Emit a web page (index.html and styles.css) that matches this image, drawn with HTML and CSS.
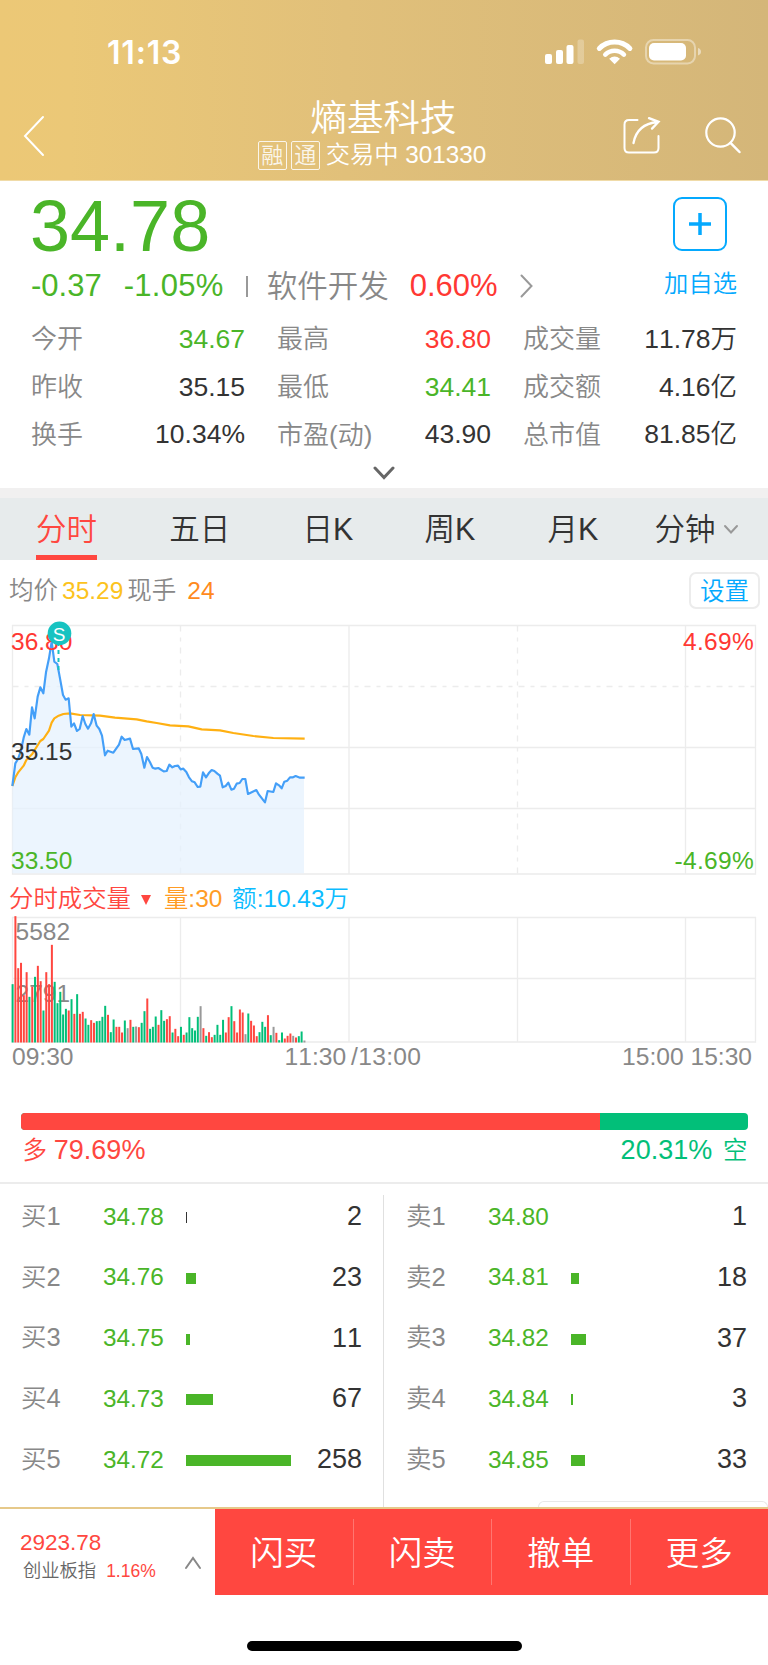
FILE: index.html
```html
<!DOCTYPE html>
<html lang="zh-CN">
<head>
<meta charset="UTF-8" />
<meta name="viewport" content="width=device-width, initial-scale=1" />
<title>熵基科技 301330</title>
<link rel="stylesheet" href="styles.css">
</head>
<body>

<header class="header">
  <div class="status-bar">
    <span class="time">11:13</span>
    <svg class="status-icons" width="160" height="28" viewBox="0 0 160 28" fill="#fff">
      <rect x="0" y="16" width="7" height="10" rx="2" />
      <rect x="11" y="12" width="7" height="14" rx="2" />
      <rect x="21.5" y="7" width="7" height="19" rx="2" />
      <rect x="32.5" y="1.5" width="6.5" height="24.5" rx="2" opacity=".25" />
      <g fill="none" stroke="#fff" stroke-width="5">
        <path d="M54.3 10.4 A21.5 21.5 0 0 1 84.9 10.4" />
        <path d="M60.3 16.6 A13 13 0 0 1 78.9 16.6" stroke-width="4.6" />
      </g>
      <path d="M69.6 26.3 L64.2 20.8 Q69.6 16.4 75 20.8 Z" />
      <rect x="101" y="2" width="49" height="23.5" rx="7.5" fill="none" stroke="#fff" stroke-width="2" opacity=".4" />
      <rect x="104" y="5" width="37" height="17.5" rx="5" />
      <path d="M153 10 Q156 11 156 13.8 Q156 16.5 153 17.5 Z" opacity=".5" />
    </svg>
  </div>
  <div class="title-bar">
    <svg class="back" width="22" height="42" viewBox="0 0 22 42"><path d="M20 2 L2 21 L20 40" /></svg>
    <div class="title">
      <h1>熵基科技</h1>
      <p><i>融</i><i>通</i><span>交易中 301330</span></p>
    </div>
    <div class="tools">
      <svg width="40" height="40" viewBox="0 0 40 40">
        <path d="M15.5 4 H7 Q2.5 4 2.5 8.5 V32 Q2.5 36.5 7 36.5 H32 Q36.5 36.5 36.5 32 V20" />
        <path d="M11.5 27 Q15 8 35.5 6 M27 2.2 L36.5 5.8 L30 12.6" stroke-width="2.3" />
      </svg>
      <svg width="40" height="40" viewBox="0 0 40 40">
        <circle cx="17.5" cy="16.5" r="14.2" stroke-width="2.2" />
        <path d="M27.5 26.8 L36.5 36" stroke-width="2.5" />
      </svg>
    </div>
  </div>
</header>

<section class="quote">
  <div class="quote-top">
    <div class="price">34.78</div>
    <button class="add">
      <svg width="24" height="24" viewBox="0 0 24 24"><path d="M12 1 V23 M1 12 H23" /></svg>
    </button>
  </div>
  <div class="change">
    <span class="green">-0.37</span>
    <span class="green pct">-1.05%</span>
    <span class="sep"></span>
    <span class="sector">软件开发</span>
    <span class="red">0.60%</span>
    <svg width="13" height="24" viewBox="0 0 13 24"><path d="M1.5 1.5 L11.5 12 L1.5 22.5" /></svg>
    <span class="add-text">加自选</span>
  </div>
  <div class="stats">
    <div><label>今开</label><b class="green">34.67</b></div>
    <div><label>最高</label><b class="red">36.80</b></div>
    <div><label>成交量</label><b>11.78万</b></div>
    <div><label>昨收</label><b>35.15</b></div>
    <div><label>最低</label><b class="green">34.41</b></div>
    <div><label>成交额</label><b>4.16亿</b></div>
    <div><label>换手</label><b>10.34%</b></div>
    <div><label>市盈(动)</label><b>43.90</b></div>
    <div><label>总市值</label><b>81.85亿</b></div>
  </div>
  <svg class="expand" width="22" height="14" viewBox="0 0 22 14"><path d="M2 2 L11 11.5 L20 2" /></svg>
</section>

<nav class="tabs">
  <a class="active">分时</a>
  <a>五日</a>
  <a>日K</a>
  <a>周K</a>
  <a>月K</a>
  <a>分钟<svg width="16" height="11" viewBox="0 0 16 11"><path d="M2 2 L8 8.5 L14 2" /></svg></a>
</nav>

<div class="info">
  <span class="avg">均价<em>35.29</em></span>
  <span>现手</span>
  <span class="hand">24</span>
  <button class="settings">设置</button>
</div>

<svg class="chart" width="768" height="262" viewBox="0 0 768 262">
  <g class="grid">
    <path d="M12.5 11.5 H755.5 V260 H12.5 Z M12.5 133.5 H755.5 M12.5 194.5 H755.5 M349 11.5 V260 M685.5 11.5 V260" />
    <path class="dashed" d="M12.5 72.5 H755.5 M180.5 11.5 V260 M517.5 11.5 V260" />
  </g>
  <!-- points are at 3x scale -->
  <g transform="translate(0 -4) scale(.33333)">
    <path class="area" d="M37 528 46 460 54 447 62 425 71 383 79 357 88 374 96 292 104 325 113 260 121 232 130 250 138 187 147 145 155 95 163 155 172 162 180 205 189 255 197 269 206 265 214 350 222 340 231 363 239 357 248 318 256 342 264 356 273 340 281 312 290 347 298 357 306 377 315 436 323 422 340 428 357 404 365 380 374 390 390 386 399 417 416 415 424 432 433 473 441 441 450 457 458 473 466 476 475 474 491 484 500 483 508 464 517 472 525 468 534 467 542 478 550 476 559 486 567 502 576 514 584 517 593 531 601 530 609 487 618 502 626 490 635 480 643 483 652 491 660 497 668 532 677 528 685 518 694 539 702 536 710 521 719 519 727 507 736 507 744 552 752 548 769 540 777 554 795 577 803 543 820 546 828 520 837 526 845 535 853 515 862 512 870 502 879 502 887 498 900 503 912 503 V790 H37 Z" />
    <polyline class="avg-line" points="37,528 46,502 54,488 71,467 79,450 96,433 104,420 121,393 130,387 147,362 155,338 163,325 176,317 190,312 210,310 240,315 300,317 345,323 410,328 440,334 470,339 510,346 565,349 605,358 660,361 700,369 760,378 820,384 914,386" />
    <polyline class="price-line" points="37,528 46,460 54,447 62,425 71,383 79,357 88,374 96,292 104,325 113,260 121,232 130,250 138,187 147,145 155,95 163,155 172,162 180,205 189,255 197,269 206,265 214,350 222,340 231,363 239,357 248,318 256,342 264,356 273,340 281,312 290,347 298,357 306,377 315,436 323,422 340,428 357,404 365,380 374,390 390,386 399,417 416,415 424,432 433,473 441,441 450,457 458,473 466,476 475,474 491,484 500,483 508,464 517,472 525,468 534,467 542,478 550,476 559,486 567,502 576,514 584,517 593,531 601,530 609,487 618,502 626,490 635,480 643,483 652,491 660,497 668,532 677,528 685,518 694,539 702,536 710,521 719,519 727,507 736,507 744,552 752,548 769,540 777,554 795,577 803,543 820,546 828,520 837,526 845,535 853,515 862,512 870,502 879,502 887,498 900,503 914,503" />
  </g>
  <text class="red" x="11" y="35.5">36.80</text>
  <text x="11" y="145.500">35.15</text>
  <text class="green" x="11" y="255">33.50</text>
  <text class="red end" x="754" y="35.5">4.69%</text>
  <text class="green end" x="754" y="255">-4.69%</text>
  <path class="s-line" d="M58.5 28 V60" />
  <circle class="s-dot" cx="59.5" cy="19.3" r="11.8" />
  <text class="s-text" x="59.2" y="26.5">S</text>
</svg>

<div class="vol-info">
  <span class="vol-name">分时成交量</span>
  <svg width="10" height="10" viewBox="0 0 10 10"><path d="M0 0 H10 L5 10 Z" /></svg>
  <span class="vol">量:30</span>
  <span class="amount">额:10.43万</span>
</div>

<svg class="chart" width="768" height="128" viewBox="0 0 768 128">
  <g class="grid">
    <path d="M12.5 2.5 H755.5 V127 H12.5 Z M12.5 63.5 H755.5 M180.5 2.5 V127 M349 2.5 V127 M517.5 2.5 V127 M685.5 2.5 V127" />
  </g>
  <text class="gray" x="15.5" y="25">5582</text>
  <text class="gray" x="15.5" y="86.5">2791</text>
  <g id="bars"></g>
</svg>

<div class="axis">
  <span>09:30</span>
  <span class="noon">11:30<i>/13:00</i></span>
  <span class="close">15:00 <i>15:30</i></span>
</div>

<section class="ratio">
  <div class="ratio-bar"><div class="long" style="width: 79.69%"></div></div>
  <div class="ratio-text"><span class="long-text">多 <b>79.69%</b></span><span class="short-text"><b>20.31%</b> 空</span></div>
</section>

<section class="book">
  <div class="side">
    <div class="row"><label>买1</label><span>34.78</span><i class="thin" style="width: 1px"></i><b>2</b></div>
    <div class="row"><label>买2</label><span>34.76</span><i style="width: 9.5px"></i><b>23</b></div>
    <div class="row"><label>买3</label><span>34.75</span><i style="width: 3.5px"></i><b>11</b></div>
    <div class="row"><label>买4</label><span>34.73</span><i style="width: 27px"></i><b>67</b></div>
    <div class="row"><label>买5</label><span>34.72</span><i style="width: 105px"></i><b>258</b></div>
  </div>
  <div class="side">
    <div class="row"><label>卖1</label><span>34.80</span><i style="width: 0"></i><b>1</b></div>
    <div class="row"><label>卖2</label><span>34.81</span><i style="width: 8px"></i><b>18</b></div>
    <div class="row"><label>卖3</label><span>34.82</span><i style="width: 15px"></i><b>37</b></div>
    <div class="row"><label>卖4</label><span>34.84</span><i style="width: 1.5px"></i><b>3</b></div>
    <div class="row"><label>卖5</label><span>34.85</span><i style="width: 13.5px"></i><b>33</b></div>
  </div>
  <div class="float-panel"></div>
</section>

<footer class="footer">
  <div class="index">
    <div>
      <div class="index-value">2923.78</div>
      <div class="index-name">创业板指<span>1.16%</span></div>
    </div>
    <svg width="18" height="14" viewBox="0 0 18 14"><path d="M2 12 L9 2 L16 12" /></svg>
  </div>
  <div class="actions">
    <button>闪买</button>
    <button>闪卖</button>
    <button>撤单</button>
    <button>更多</button>
  </div>
</footer>
<div class="home-bar"></div>

<script>
  // one bar per minute: r = up, g = down, x = flat, then the height
  const volumes = 'g175 r379 r223 r239 r142 r211 g137 r167 g197 r230 r184 g96 r211 r175 r293 g182 g118 g152 g84 g101 r96 g130 r86 g145 r86 r92 g72 g53 r67 r59 g64 g65 g77 g110 r83 g31 g69 r47 r47 r30 g66 x43 r68 g47 x48 r46 g59 g94 r132 g41 g47 g78 r53 g97 g65 r70 r79 g30 r41 r19 g47 r23 g30 g76 g43 g36 g77 x109 r43 g20 r31 r16 g23 g53 g23 g68 r30 r76 g109 r64 r30 r99 r90 x25 g87 r65 r51 r19 g31 g62 g47 r82 g22 x47 r29 g7 g30 r12 r20 r27 x20 r15 g19 g33 x6'.split(' ');
  const colors = { r: '#ff4740', g: '#02bf79', x: '#999' };
  const bars = document.getElementById('bars');

  volumes.forEach((v, i) => {
    const h = v.slice(1) / 3;
    const rect = document.createElementNS('http://www.w3.org/2000/svg', 'rect');
    rect.setAttribute('x', 11.6 + i * 2.806);
    rect.setAttribute('y', 127.5 - h);
    rect.setAttribute('width', 2);
    rect.setAttribute('height', h);
    rect.setAttribute('fill', colors[v[0]]);
    bars.appendChild(rect);
  });
</script>

</body>
</html>
```

FILE: styles.css
```css
* {
  box-sizing: border-box;
}
body {
  margin: 0;
  width: 768px;
  height: 1665px;
  overflow: hidden;
  background: #fff;
  color: #333;
  font-family: "Liberation Sans", "Noto Sans CJK SC", sans-serif;
  font-weight: 350;
  font-kerning: none;
  line-height: 1.2;
}
h1, p {
  margin: 0;
  font-weight: inherit;
}
b, i, em {
  font-weight: inherit;
  font-style: normal;
}
button {
  font: inherit;
  padding: 0;
  border: none;
  background: none;
}
svg {
  display: block;
  flex: none;
}
svg path {
  stroke-linecap: round;
}
.green {
  color: #4ab528;
  fill: #4ab528;
}
.red {
  color: #ff3833;
  fill: #ff3833;
}

/* header */
.header {
  height: 181px;
  padding-top: 36px;
  background: linear-gradient(90deg, #ecc876 0%, #ebc877 9%, #e1c07a 45%, #d4b679 100%);
  border-bottom: 1px solid #f0dba8;
  color: #fff;
}
.status-bar {
  display: flex;
  justify-content: space-between;
  height: 34px;
  padding: 0 63px 0 107px;
}
.time {
  font: 600 32px/34px Inter, sans-serif;
  letter-spacing: .8px;
}
.status-icons {
  margin-top: 2px;
}
.title-bar {
  display: flex;
  position: relative;
  justify-content: space-between;
  height: 100px;
  padding: 0 25px 0 23px;
}
.title-bar svg {
  fill: none;
  stroke: #fff;
  stroke-width: 2;
}
.back {
  margin-top: 45px;
}
.title {
  position: absolute;
  left: 0;
  right: 24px;
  top: 25px;
  text-align: center;
}
.title h1 {
  margin-left: 23px;
  font-size: 36.5px;
  line-height: 48px;
}
.title p {
  display: flex;
  justify-content: center;
  align-items: center;
  font-size: 24.3px;
  line-height: 30px;
  margin-top: -3px;
}
.title i {
  width: 29px;
  height: 29px;
  margin-right: 4px;
  border: 1px solid #fff;
  border-radius: 2px;
  font-size: 22px;
  line-height: 28px;
  opacity: .85;
}
.title p span {
  margin-left: 2px;
}
.tools {
  display: flex;
  gap: 41px;
  margin-top: 46px;
}

/* quote */
.quote {
  height: 307px;
  padding: 0 31px;
}
.quote-top {
  display: flex;
  justify-content: space-between;
  height: 80px;
}
.price {
  margin: 5px 0 0 -1px;
  color: #4ab528;
  font-size: 72px;
  line-height: 80px;
}
.add {
  display: flex;
  align-items: center;
  justify-content: center;
  width: 54px;
  height: 54px;
  margin: 16px 10px 0 0;
  border: 2px solid #04a9fe;
  border-radius: 9px;
}
.add path {
  stroke: #04a9fe;
  stroke-width: 3.5;
  stroke-linecap: butt;
}
.change {
  display: flex;
  align-items: center;
  height: 50px;
  font-size: 31px;
}
.pct {
  margin-left: 22px;
  letter-spacing: .3px;
}
.sep {
  width: 2px;
  height: 21px;
  margin: 0 19px 0 22px;
  background: #999;
}
.sector {
  margin-right: 21px;
  color: #888;
  font-size: 30.5px;
}
.change svg {
  margin-left: 22px;
  fill: none;
  stroke: #999;
  stroke-width: 2;
}
.add-text {
  margin: -4px 0 0 auto;
  color: #04a9fe;
  font-size: 24.3px;
}
.stats {
  display: grid;
  grid-template-columns: repeat(3, 214px);
  column-gap: 32px;
  grid-auto-rows: 47.7px;
  margin-top: 5px;
  align-items: center;
}
.stats div {
  display: flex;
  justify-content: space-between;
  align-items: center;
}
.stats label {
  color: #888;
  font-size: 26px;
}
.stats b {
  font-size: 26.5px;
}
.expand {
  margin: 7px auto 0;
  fill: none;
  stroke: #666;
  stroke-width: 3;
}

/* tabs */
.tabs {
  display: flex;
  height: 72px;
  padding-left: 36px;
  border-top: 10px solid #f1f0f0;
  background: #e7ebec;
  font-size: 30.5px;
  line-height: 66px;
}
.tabs a {
  display: flex;
  align-items: center;
  margin-right: 72.3px;
}
.tabs a:nth-child(3) {
  margin-right: 71px;
}
.tabs a:nth-child(5) {
  margin-right: 56px;
}
.tabs a:last-child {
  margin-right: 0;
}
.tabs .active {
  color: #ff4740;
  box-shadow: inset 0 -5px #ff4740;
}
.tabs svg {
  margin-left: 8px;
  fill: none;
  stroke: #999;
  stroke-width: 2;
}

/* chart */
.info {
  display: flex;
  align-items: center;
  height: 54px;
  padding: 8px 8px 0 9px;
  color: #888;
  font-size: 24.5px;
}
.avg {
  margin-right: 4px;
}
.avg em {
  margin-left: 4px;
  color: #fcc31d;
}
.hand {
  margin-left: 11px;
  color: #ff8a1d;
}
.settings {
  width: 71px;
  height: 37px;
  margin: -2px 0 0 auto;
  padding-top: 3px;
  border: 2px solid #ececec;
  border-radius: 7px;
  color: #04a9fe;
}
.chart text {
  font-size: 24.5px;
}
.chart text:not([class]) {
  fill: #333;
}
.chart .gray {
  fill: #888;
}
.chart .end {
  text-anchor: end;
  letter-spacing: .3px;
}
.grid path {
  fill: none;
  stroke: #ececec;
  stroke-width: 1.3;
}
.grid .dashed {
  stroke-dasharray: 6 6 4 6;
  stroke-linecap: butt;
}
.area {
  fill: #e6f2fd;
  opacity: .75;
}
.price-line, .avg-line {
  fill: none;
  stroke: #449ff8;
  stroke-width: 6.5;
  stroke-linejoin: round;
}
.avg-line {
  stroke: #ffb012;
}
.s-line {
  stroke: #17c3c1;
  stroke-width: 2;
  stroke-dasharray: 4 4;
}
.s-line, .chart path {
  stroke-linecap: butt;
}
.s-dot {
  fill: #17c3c1;
}
.chart .s-text {
  fill: #fff;
  font-size: 19px;
  text-anchor: middle;
}
.vol-info {
  display: flex;
  align-items: center;
  height: 39px;
  padding: 7px 0 0 9px;
  font-size: 24.4px;
}
.vol-name {
  color: #ff4740;
}
.vol-info svg {
  margin: 2px 13px 0 10px;
  fill: #ff4740;
}
.vol {
  color: #ff9c25;
}
.amount {
  margin-left: 10px;
  color: #0bbcff;
}
.axis {
  display: flex;
  padding: 0 16px 0 12px;
  color: #888;
  font-size: 24.6px;
  line-height: 28px;
}
.noon {
  margin-left: 211px;
}
.noon i {
  margin-left: 5px;
  letter-spacing: .3px;
}
.close {
  margin-left: auto;
}

/* long / short */
.ratio {
  height: 113px;
  padding: 42px 20.5px 0;
  border-bottom: 2px solid #ececec;
}
.ratio-bar {
  height: 17px;
  border-radius: 4px;
  overflow: hidden;
  background: #02bf79;
}
.long {
  height: 17px;
  background: #ff4740;
}
.ratio-text {
  display: flex;
  justify-content: space-between;
  padding: 3px 0 0 2px;
  font-size: 24.5px;
  line-height: 34px;
}
.ratio-text b {
  font-size: 27px;
}
.long-text {
  color: #ff4740;
}
.short-text {
  color: #02bf79;
}
.short-text b {
  margin-right: 4px;
}

/* order book */
.book {
  display: flex;
  position: relative;
  height: 323px;
}
.side {
  width: 383px;
  padding: 2px 21px 0 21px;
}
.side + .side {
  width: 385px;
  margin-top: 11px;
  padding-top: 0;
  border-left: 1px solid #e0e0e0;
  padding-left: 22px;
}
.side + .side .row:first-child {
  margin-top: -9px;
}
.row {
  display: flex;
  align-items: center;
  height: 60.7px;
}
.row label {
  width: 82px;
  color: #888;
  font-size: 25.5px;
}
.row span {
  width: 83px;
  color: #4ab528;
  font-size: 24.3px;
}
.row i {
  height: 11px;
  margin-top: 3px;
  background: #4ab528;
}
.row .thin {
  background: #333;
}
.row b {
  margin-left: auto;
  font-size: 27px;
}
.float-panel {
  position: absolute;
  right: 0;
  bottom: 0;
  width: 230px;
  height: 6px;
  border: 1px solid #e8e8e8;
  border-bottom: none;
  border-radius: 6px 6px 0 0;
}

/* footer */
.footer {
  display: flex;
  height: 88px;
  border-top: 2px solid #e6c98a;
}
.index {
  display: flex;
  justify-content: space-between;
  width: 215px;
  padding: 20px 13px 0 20px;
}
.index-value {
  color: #ff4740;
  font-size: 22.5px;
  line-height: 28px;
}
.index-name {
  margin: 1px 0 0 3px;
  color: #666;
  font-size: 18.3px;
  line-height: 26px;
}
.index-name span {
  margin-left: 10px;
  color: #ff4740;
  font-size: 17.5px;
}
.index svg {
  margin-top: 27px;
  fill: none;
  stroke: #888;
  stroke-width: 2;
}
.actions {
  display: flex;
  flex: 1;
  align-items: center;
  background: #ff4740;
}
.actions button {
  flex: 1;
  height: 66px;
  padding-top: 5px;
  color: #fff;
  font-size: 33.5px;
}
.actions button + button {
  border-left: 1px solid #ff7670;
}
.home-bar {
  width: 275px;
  height: 10px;
  margin: 46px auto 0;
  border-radius: 5px;
  background: #000;
}
```
